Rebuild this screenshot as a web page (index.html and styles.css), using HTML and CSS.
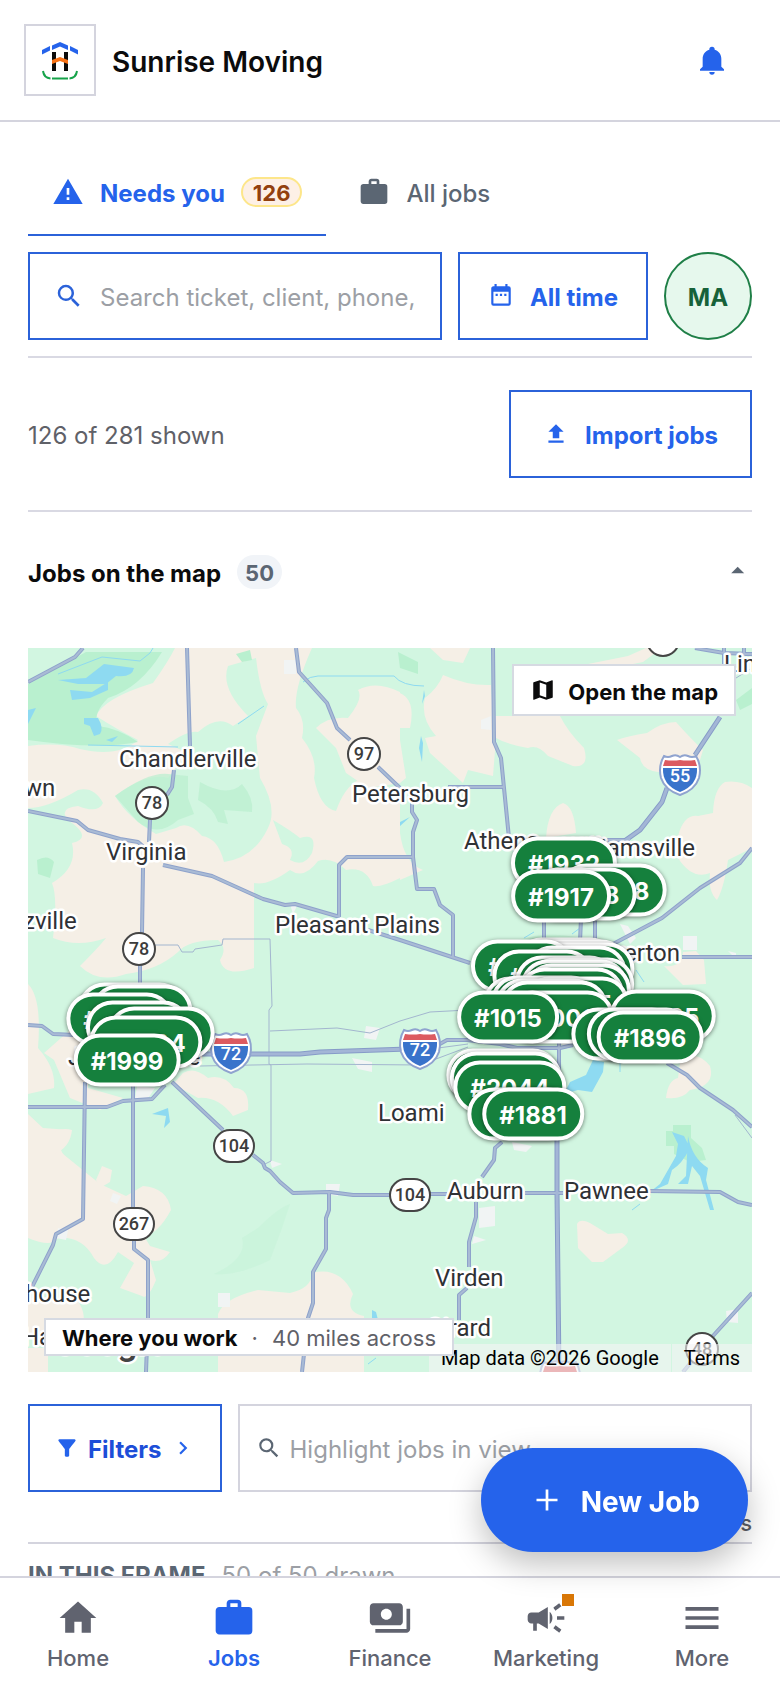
FILE: index.html
```html
<!DOCTYPE html>
<html lang="en">

<head>
  <meta charset="UTF-8">
  <meta name="viewport" content="width=device-width, initial-scale=1">
  <title>Jobs - Sunrise Moving</title>
  <link rel="stylesheet" href="styles.css">
</head>

<body>
  <header class="topbar">
    <a class="logo" href="#" aria-label="Sunrise Moving home">
      <svg width="40" height="40" viewBox="0 0 40 40">
        <path d="M2 10L10 6V10.500L2 14.500ZM12 5.500L20 2 28 5.500V10L20 6.500 12 10ZM30 6L38 10V14.500L30 10.500Z" fill="#2563eb" />
        <path d="M12 12h4v19h-4zM24 12h4v19h-4z" fill="#0b0b0b" />
        <path d="M12 20l8-3 8 3v4l-8-3-8 3z" fill="#f97316" />
        <path d="M3 31q1 7 7.500 7.500M12 38.500h16M29.500 38.500q6.500-.5 7.500-7.500" fill="none" stroke="#16a34a" stroke-width="2" />
      </svg>
    </a>
    <h1 class="label">Sunrise Moving</h1>
    <button class="bell" type="button" aria-label="Notifications">
      <svg class="icon-32" viewBox="0 0 24 24"><path d="M21,19V20H3V19L5,17V11C5,7.9 7.03,5.17 10,4.29C10,4.19 10,4.1 10,4A2,2 0 0,1 12,2A2,2 0 0,1 14,4C14,4.1 14,4.19 14,4.29C16.97,5.17 19,7.9 19,11V17L21,19M14,21A2,2 0 0,1 12,23A2,2 0 0,1 10,21" /></svg>
    </button>
  </header>

  <main>
    <div class="tabs">
      <button class="tab active" type="button">
        <svg class="icon-32" viewBox="0 0 24 24"><path d="M13 14H11V9H13M13 18H11V16H13M1 21H23L12 2L1 21Z" /></svg>
        <span class="label">Needs you</span>
        <span class="chip chip-warn">126</span>
      </button>
      <button class="tab" type="button">
        <svg class="icon-32" viewBox="0 0 24 24"><path d="M10,2H14A2,2 0 0,1 16,4V6H20A2,2 0 0,1 22,8V19A2,2 0 0,1 20,21H4C2.89,21 2,20.1 2,19V8C2,6.89 2.89,6 4,6H8V4C8,2.89 8.89,2 10,2M14,6V4H10V6H14Z" /></svg>
        <span class="label">All jobs</span>
      </button>
    </div>

    <div class="search-row">
      <label class="field field-main">
        <svg class="icon-30" viewBox="0 0 24 24"><path d="M9.5,3A6.5,6.5 0 0,1 16,9.5C16,11.11 15.41,12.59 14.44,13.73L14.71,14H15.5L20.5,19L19,20.5L14,15.5V14.71L13.73,14.44C12.59,15.41 11.11,16 9.5,16A6.5,6.5 0 0,1 3,9.5A6.5,6.5 0 0,1 9.5,3M9.5,5C7,5 5,7 5,9.5C5,12 7,14 9.5,14C12,14 14,12 14,9.5C14,7 12,5 9.5,5Z" /></svg>
        <input class="label" type="text" placeholder="Search ticket, client, phone," aria-label="Search jobs">
      </label>
      <button class="btn btn-time" type="button">
        <svg class="icon-26" viewBox="0 0 24 24"><path d="M9,10H7V12H9V10M13,10H11V12H13V10M17,10H15V12H17V10M19,3H18V1H16V3H8V1H6V3H5C3.89,3 3,3.9 3,5V19A2,2 0 0,0 5,21H19A2,2 0 0,0 21,19V5A2,2 0 0,0 19,3M19,19H5V8H19V19Z" /></svg>
        <span class="label">All time</span>
      </button>
      <button class="avatar label" type="button">MA</button>
    </div>

    <div class="summary">
      <p class="label">126 of 281 shown</p>
      <button class="btn btn-import" type="button">
        <svg class="icon-26" viewBox="0 0 24 24"><path d="M9,16V10H5L12,3L19,10H15V16H9M5,20V18H19V20H5Z" /></svg>
        <span class="label">Import jobs</span>
      </button>
    </div>

    <button class="map-head" type="button" aria-expanded="true">
      <span class="label">Jobs on the map</span>
      <span class="chip chip-count">50</span>
      <svg class="icon-26 caret" viewBox="3 4 20 20"><path d="M7,15L12,10L17,15H7Z" /></svg>
    </button>

    <section class="map" id="map" aria-label="Jobs on the map">
      <svg class="map-art" viewBox="0 0 724 724">
        <defs>
          <symbol id="interstate" viewBox="0 0 40 42" overflow="visible">
            <path d="M4 2q4 2 8 0q4-2 8 1q4-3 8-1q4 2 8 0q6 10 3 22q-4 12-19 17q-15-5-19-17q-3-12 3-22z" fill="#fff" stroke="#8fa3cf" stroke-width="2" />
            <path d="M5 6q8 1 15 0q7 1 15 0l2 6H3z" fill="#dc5a60" />
            <path d="M3 14h34q1 17-17 24q-18-7-17-24z" fill="#3973cb" />
          </symbol>
          <g id="roads">
            <path d="M0 34L47 9 55 0M159 0L162 98M146 122L144 139 139 147M122 172L121 194M115 220L114 285M112 317V337" />
            <path d="M0 163L49 173 60 182 92 191 110 194 117 200M135 217L184 228 235 251 257 257 267 256 312 269M340 282L372 292 442 315" />
            <path d="M268 0L271 24 299 55 309 80 322 92M350 119L372 140M311 269V217L319 209H385L389 241H406L412 257 425 267V309M385 209V184L389 172 384 164V154M420 139H476" />
            <path d="M465 0L466 94 473 110 481 190M579 192H602M667 0L696 5 724 6M696 0V18M716 0V8M724 200L712 215 672 240 634 270 585 296M516 272V294M553 270L552 294M567 270V296M654 309H724" />
            <path d="M0 377L14 378 25 386 47 387M57 434L55 571 28 586 25 597 4 639M105 437V559M106 592V601L120 612V670L118 724M0 459H79L95 453 124 451 137 437" />
            <path d="M144 434L195 482M225 507L235 515 237 520 242 523 252 534 265 545 302 544 325 547H362M301 544V562L298 570V601L285 624V655L280 670 274 724M402 546H419M497 545H535M620 543L692 544 710 554 724 557" />
            <path d="M474 494L467 500 466 512 454 529M448 554V569L441 594V619M439 640L431 647V672M639 415L659 427 672 440 705 462 724 479M724 645L684 689 655 724M410 397L419 392H439L472 396 489 400H532L545 397M531 395V439" />
          </g>
          <path id="freeways" d="M692 69L667 107M639 140L634 154 612 182 595 194 585 210M170 406H272L292 404 380 401M529 492V545L531 724" />
        </defs>

        <!-- land -->
        <rect width="724" height="724" fill="#d2f6e1" />
        <g class="sand">
          <path d="M147 0H284Q266 40 268 60Q278 72 274 90Q290 110 286 130Q292 160 308 163Q316 140 330 132L372 150V230Q352 240 345 238Q338 218 318 222Q304 208 290 213Q276 232 262 222Q240 238 226 235V320Q196 330 192 312Q200 300 190 292Q160 292 150 304Q130 322 98 326Q70 336 52 318Q70 300 78 290Q50 300 25 290Q30 250 24 235Q50 220 44 195Q66 190 40 172Q30 160 50 158Q70 166 75 155Q66 138 50 142Q20 160 0 160V98Q30 94 52 101Q90 110 110 92Q90 82 68 68Q76 50 125 35Q140 14 147 0Z" />
          <path d="M288 80Q300 68 320 70Q336 50 330 42Q348 32 372 44V92L378 130 372 135 340 140 318 125 308 100Z" />
          <path d="M402 0H442L435 15 415 12Z" />
          <path d="M372 45Q388 52 382 80L372 80ZM372 185Q376 215 395 222L372 232Z" />
          <path d="M415 27Q440 38 463 37L465 68H532Q540 84 556 100Q562 120 545 118L520 108Q510 96 500 100Q478 96 468 90L465 128 440 122 435 135 402 105 397 90 408 88Q392 70 397 50Q410 40 415 27Z" />
          <path d="M589 92Q600 88 619 85Q634 74 648 74Q664 92 675 102L672 112Q650 108 650 122L630 124Q614 122 612 110Z" />
          <path d="M697 134Q712 132 724 140V200L700 212Q696 240 689 252Q680 244 682 225Q664 232 650 210V188Q656 166 670 168L685 165Q686 140 697 134Z" />
          <path d="M535 155Q546 158 548 185L518 190Q520 160 535 155Z" />
          <path d="M560 16L600 8 618 0H634L615 14 600 17Z" />
          <path d="M636 318Q654 320 655 304L668 303 676 312 678 336 655 337Z" />
          <path d="M652 415Q668 400 682 418Q688 438 662 442Q654 452 638 450Q640 432 650 430Z" />
          <path d="M549 576Q552 570 562 575L580 586 594 585Q606 592 594 600L575 614H564L550 600Z" />
          <path d="M0 336Q14 350 10 400Q28 420 26 440L0 446ZM16 405L50 375 60 395V440L95 450 72 462 42 450 26 412Z" />
          <path d="M0 466L15 480 42 482Q24 500 40 510L72 536 98 548 115 538Q140 540 143 562Q130 586 116 588L122 598 142 604Q134 616 122 612L128 632Q120 652 114 648L92 640 106 615 90 604Q78 626 66 610Q54 588 30 590Q24 600 0 590Z" />
          <path d="M18 490Q30 478 44 482Q42 500 26 506ZM68 532L74 518 84 522 82 534 72 540Z" />
          <path d="M155 425Q166 418 180 430Q196 426 206 440Q222 440 220 462L205 468Q190 448 170 450L145 436Z" />
          <path d="M190 666Q196 650 230 642L262 645Q284 640 284 625Q312 618 325 646Q316 664 336 668V724H190Z" />
          <path d="M0 650L46 648Q60 664 54 680L0 690ZM0 700H20V724H0Z" />
        </g>
        <g class="mint">
          <path d="M140 96Q160 82 170 84Q190 66 205 78L220 68Q192 40 200 18L228 10Q232 44 240 56L228 88 232 130Q250 160 240 180Q226 210 196 214Q190 190 174 188Q160 172 148 180L128 186Q100 170 87 148Q120 124 140 130L160 105Z" />
          <path d="M245 172Q262 182 272 190Q290 184 284 205Q276 220 262 212Q268 200 254 196Z" />
        </g>
        <g class="forest">
          <path d="M0 36L58 4H134Q112 40 80 50Q64 66 70 78Q90 80 110 94Q70 102 0 92Z" />
          <path d="M87 148Q120 124 140 126L160 128V150L166 166 150 172Q130 190 110 174ZM172 134Q200 150 214 136Q226 150 224 164L196 162 200 176 190 174Q186 160 170 152Z" opacity=".7" />
          <path d="M9 212Q20 206 26 214L22 230 10 226ZM208 6L222 2 224 12 214 14Z" />
          <path d="M370 4L390 14V26L372 20ZM645 477H663V490L674 500 678 512 662 514 646 506V498H638V483H645ZM708 52L724 40V56L712 62Z" />
          <path d="M230 580Q250 560 262 556L254 580 242 612Q210 628 186 626Q220 610 214 590Z" opacity=".25" />
          <path d="M490 292Q530 280 570 296L600 320 570 330 500 326Z" opacity=".5" />
        </g>
        <g class="town">
          <path d="M256 12h12v14h-12zM453 72l10-4v14l-10-1zM655 288h14v14h-14zM700 303l8 2v6zM592 276l8 2 8 12-6 6zM338 378l14 2-4 12-12-2zM324 410l20 4v10l-14-3zM109 438l18 2-8 12-12-2zM298 536h14l-2 12-12-2zM242 512l12 4-10 4zM190 645h12v14h-12zM30 580l10 2-2 10-10-2zM451 560l16-2v20l-16 2zM446 588l12 4-14 4zM484 494l20 4-6 6-12-2zM698 663l12-2v14l-11-1z" />
          <path d="M85 545l8 3-4 8-7-3zM262 256l7 2-4 8zM532 395l16-4-8 10z" />
        </g>

        <!-- water -->
        <g class="water">
          <path d="M30 32L58 30 76 16 106 20Q104 30 88 28L78 36 50 36ZM42 42L64 44 80 34 80 42 62 50 44 52ZM56 70H70Q76 80 72 86L66 88 62 78 56 76ZM0 62L8 60 0 76ZM78 92L90 88 84 94Z" />
          <path d="M565 412L576 414 575 424 564 444 550 442 536 446 542 434 558 427Z" />
          <path d="M644 484L656 488 662 500Q654 516 644 522L640 536 622 544 632 536 648 508 650 496ZM660 488Q664 510 680 520L678 532 686 562 682 562 672 528 664 518 660 536 650 536 658 528Z" />
          <path d="M124 466L140 460 142 474 136 480 138 468ZM372 174L382 169 372 178ZM393 88L395 95 394 114 391 100ZM396 42L394 56 397 48ZM344 662L348 664 350 672 344 670Z" />
        </g>
        <g class="stream">
          <path d="M30 26L74 9 112 13 122 5 125 0M210 76L236 58M275 34Q282 28 290 28H366Q374 38 396 38M60 97L150 99M496 290L506 284M544 286L552 280M608 322L616 334M604 562L612 556M592 424V414M340 716L348 710" />
        </g>

        <!-- county lines and back roads -->
        <g class="thin">
          <path d="M127 297H150L154 304H165L167 301L194 297 195 291H242L244 358 241 362V416L243 417V513L235 517" />
          <path d="M242 383L309 380 342 385 372 373 402 364 440 362M172 418L279 416 392 417 440 399M410 400L440 396M707 467L724 490M692 40L724 20" />
        </g>

        <!-- highways: dark casing first, then the lighter fill -->
        <use href="#roads" class="road-casing" />
        <use href="#freeways" class="freeway-casing" />
        <use href="#roads" class="road" />
        <use href="#freeways" class="freeway" />

        <!-- route shields -->
        <g class="route">
          <circle cx="336" cy="106" r="16" /><text x="336" y="112">97</text>
          <circle cx="124" cy="155" r="16" /><text x="124" y="161">78</text>
          <circle cx="111" cy="301" r="16" /><text x="111" y="307">78</text>
          <circle cx="635" cy="-8" r="16" />
          <circle cx="674" cy="701" r="16" /><text x="674" y="707">48</text>
          <rect x="186" y="482" width="40" height="32" rx="16" /><text x="206" y="504">104</text>
          <rect x="86" y="560" width="40" height="32" rx="16" /><text x="106" y="582">267</text>
          <rect x="362" y="531" width="40" height="32" rx="16" /><text x="382" y="553">104</text>
        </g>
        <g class="shield">
          <use href="#interstate" x="183" y="384" width="40" height="42" /><text x="203" y="412">72</text>
          <use href="#interstate" x="372" y="380" width="40" height="42" /><text x="392" y="408">72</text>
          <use href="#interstate" x="632" y="106" width="40" height="42" /><text x="652" y="134">55</text>
          <use href="#interstate" x="512" y="712" width="40" height="42" />
        </g>

        <!-- towns -->
        <g class="place">
          <text x="91" y="119">Chandlerville</text>
          <text x="-4" y="148">wn</text>
          <text x="78" y="212">Virginia</text>
          <text x="-5" y="281">zville</text>
          <text x="247" y="285">Pleasant Plains</text>
          <text x="324" y="154">Petersburg</text>
          <text x="436" y="201">Athens</text>
          <text class="end" x="667" y="208">Williamsville</text>
          <text class="end" x="652" y="313">Riverton</text>
          <text x="696" y="24">Lin</text>
          <text x="40" y="417">Jacksonville</text>
          <text x="350" y="473">Loami</text>
          <text x="419" y="551">Auburn</text>
          <text x="536" y="551">Pawnee</text>
          <text x="407" y="638">Virden</text>
          <text class="end" x="463" y="688">Girard</text>
          <text x="-3" y="654">house</text>
          <text x="-6" y="697">Ha</text>
          <text class="brand" x="24" y="706">Google</text>
        </g>
      </svg>

      <div class="pins" id="pins"></div>

      <a class="open-map" href="#">
        <svg class="icon-26" viewBox="0 0 24 24"><path d="M20.500 3l-.16.03L15 5.100 9 3 3.360 4.900c-.21.07-.36.25-.36.48V20.500c0 .28.22.5.5.5l.16-.03L9 18.900l6 2.100 5.640-1.900c.21-.07.36-.25.36-.48V3.500c0-.28-.22-.5-.5-.5zM15 19l-6-2.110V5l6 2.110V19z" /></svg>
        <span class="label">Open the map</span>
      </a>
      <div class="attribution">
        <span>Map data ©2026 Google</span>
        <a href="#">Terms</a>
      </div>
      <p class="area"><b>Where you work</b><span>·</span><span>40 miles across</span></p>
    </section>

    <div class="filter-row">
      <button class="btn btn-filter" type="button">
        <svg class="icon-26" viewBox="0 0 24 24"><path d="M4.250 5.610C6.270 8.200 10 13 10 13v6c0 .55.45 1 1 1h2c.55 0 1-.45 1-1v-6s3.720-4.800 5.740-7.390A.998.998 0 0 0 18.950 4H5.040c-.83 0-1.300.95-.79 1.610z" /></svg>
        <span class="label">Filters</span>
        <svg class="icon-26" viewBox="0 0 24 24"><path d="M8.59,16.58L13.17,12L8.59,7.41L10,6L16,12L10,18L8.59,16.58Z" /></svg>
      </button>
      <label class="field field-quiet">
        <svg class="icon-26" viewBox="0 0 24 24"><path d="M9.5,3A6.5,6.5 0 0,1 16,9.5C16,11.11 15.41,12.59 14.44,13.73L14.71,14H15.5L20.5,19L19,20.5L14,15.5V14.71L13.73,14.44C12.59,15.41 11.11,16 9.5,16A6.5,6.5 0 0,1 3,9.5A6.5,6.5 0 0,1 9.5,3M9.5,5C7,5 5,7 5,9.5C5,12 7,14 9.5,14C12,14 14,12 14,9.5C14,7 12,5 9.5,5Z" /></svg>
        <input class="label" type="text" placeholder="Highlight jobs in view" aria-label="Highlight jobs in view">
      </label>
    </div>
    <p class="job-total">50 jobs</p>

    <h2 class="frame-head">IN THIS FRAME <small>50 of 50 drawn</small></h2>
  </main>

  <button class="fab" type="button">
    <svg class="icon-36" viewBox="0 0 24 24"><path d="M19 12.900H12.900V19H11.100V12.900H5V11.100H11.100V5H12.900V11.100H19Z" /></svg>
    <span class="label">New Job</span>
  </button>

  <nav class="tabbar">
    <a href="#">
      <svg class="icon-44" viewBox="0 0 24 24"><path d="M10,20V14H14V20H19V12H22L12,3L2,12H5V20H10Z" /></svg>
      Home
    </a>
    <a class="active" href="#">
      <svg class="icon-44" viewBox="0 0 24 24"><path d="M10,2H14A2,2 0 0,1 16,4V6H20A2,2 0 0,1 22,8V19A2,2 0 0,1 20,21H4C2.89,21 2,20.1 2,19V8C2,6.89 2.89,6 4,6H8V4C8,2.89 8.89,2 10,2M14,6V4H10V6H14Z" /></svg>
      Jobs
    </a>
    <a href="#">
      <svg class="icon-44" viewBox="0 0 24 24"><path d="M19 14V6c0-1.100-.9-2-2-2H3c-1.100 0-2 .9-2 2v8c0 1.100.9 2 2 2h14c1.100 0 2-.9 2-2zm-9-1c-1.660 0-3-1.340-3-3s1.340-3 3-3 3 1.340 3 3-1.340 3-3 3zm13-6v11c0 1.100-.9 2-2 2H4v-2h17V7h2z" /></svg>
      Finance
    </a>
    <a href="#">
      <span class="badge-wrap">
        <svg class="icon-44" viewBox="0 0 24 24"><path d="M18 11v2h4v-2h-4zm-2 6.610c.96.71 2.210 1.650 3.200 2.390.4-.53.8-1.070 1.200-1.600-.99-.74-2.240-1.680-3.200-2.400-.4.54-.8 1.080-1.200 1.610zM20.400 5.600c-.4-.53-.8-1.070-1.200-1.600-.99.74-2.240 1.680-3.200 2.400.4.53.8 1.070 1.200 1.600.96-.72 2.210-1.650 3.200-2.400zM4 9c-1.100 0-2 .9-2 2v2c0 1.100.9 2 2 2h1v4h2v-4h1l5 3V6L8 9H4zm11.500 3c0-1.330-.58-2.530-1.500-3.350v6.690c.92-.81 1.500-2.010 1.500-3.340z" /></svg>
        <i class="badge"></i>
      </span>
      Marketing
    </a>
    <a href="#">
      <svg class="icon-44" viewBox="0 0 24 24"><path d="M3,6H21V8H3V6M3,11H21V13H3V11M3,16H21V18H3V16Z" /></svg>
      More
    </a>
  </nav>

  <script src="script.js"></script>
</body>

</html>
```
FILE: styles.css
```css
* {
  box-sizing: border-box;
}

body {
  margin: 0;
  background-color: #fff;
  color: #0b0b0c;
  font-family: Inter, "Liberation Sans", sans-serif;
  font-size: 24px;
  line-height: 32px;
}

h1,
h2,
p {
  margin: 0;
}

button,
input {
  font: inherit;
  color: inherit;
}

button {
  padding: 0;
  border: none;
  background: none;
  cursor: pointer;
}

a {
  color: inherit;
  text-decoration: none;
}

svg {
  display: block;
  flex: none;
  fill: currentColor;
}

.icon-26 { width: 26px; height: 26px; }
.icon-30 { width: 30px; height: 30px; }
.icon-32 { width: 32px; height: 32px; }
.icon-36 { width: 36px; height: 36px; }
.icon-44 { width: 44px; height: 44px; }

/* header */
.topbar {
  display: flex;
  align-items: center;
  gap: 16px;
  height: 122px;
  padding: 0 52px 0 24px;
  border-bottom: 2px solid #d4d4de;
}

.logo {
  display: flex;
  align-items: center;
  justify-content: center;
  width: 72px;
  height: 72px;
  border: 2px solid #d4d4de;
}

.topbar h1 {
  flex: 1;
  font-size: 28px;
  font-weight: 600;
}

.bell {
  color: #2563eb;
}

main {
  padding: 28px 28px 96px;
}

/* tabs */
.tabs {
  display: flex;
  gap: 8px;
}

.tab {
  display: flex;
  align-items: center;
  gap: 16px;
  height: 86px;
  padding: 0 24px;
  border-bottom: 2px solid transparent;
  color: #5b6673;
  font-weight: 500;
}

.tab.active {
  border-bottom-color: #2b62d9;
  color: #2563eb;
  font-weight: 700;
}

.chip {
  border-radius: 18px;
  font-size: 22px;
  font-weight: 700;
}

.chip-warn {
  padding: 2px 10px 0;
  border: 2px solid #fde68a;
  background-color: #fdf0e6;
  color: #92400e;
  line-height: 24px;
}

.chip-count {
  padding: 2px 8px 0;
  background-color: #f1f4f8;
  color: #5b6673;
  line-height: 32px;
}

/* search and filters */
.search-row,
.filter-row {
  display: flex;
  gap: 16px;
}

.search-row {
  padding: 16px 0;
  border-bottom: 2px solid #d9d9e3;
}

.field {
  display: flex;
  flex: 1;
  align-items: center;
  min-width: 0;
  height: 88px;
  border: 2px solid #d4d4de;
}

.field input {
  flex: 1;
  min-width: 0;
  padding: 0;
  border: none;
  outline: none;
  background: none;
}

.field input::placeholder {
  color: #9c9fa5;
  opacity: 1;
}

.field-main {
  gap: 16px;
  padding: 0 24px;
  border-color: #2b62d9;
}

.field-main svg {
  color: #2b62d9;
}

.field-quiet {
  gap: 8px;
  padding: 0 16px;
}

.field-quiet svg {
  color: #5b6673;
}

.btn {
  display: flex;
  align-items: center;
  gap: 16px;
  height: 88px;
  border: 2px solid #2b62d9;
  color: #2563eb;
  font-weight: 700;
}

.btn-time {
  padding: 0 28px;
}

.btn-import {
  padding: 0 32px;
}

.btn-filter {
  gap: 8px;
  padding: 0 24px;
}

.btn-filter span {
  color: #1d4ed8;
}

.avatar {
  width: 88px;
  height: 88px;
  border: 2px solid #1f7f47;
  border-radius: 50%;
  background-color: #e6f8ed;
  color: #166239;
  font-weight: 700;
}

.summary {
  display: flex;
  align-items: center;
  justify-content: space-between;
  padding: 32px 0;
  border-bottom: 2px solid #d9d9e3;
  color: #5f6168;
}

/* text sits a little low beside the icons */
.label,
.field .label {
  padding-top: 4px;
}

/* map */
.map-head {
  display: flex;
  align-items: center;
  gap: 16px;
  width: 100%;
  height: 120px;
  margin-bottom: 16px;
  font-weight: 700;
}

.caret {
  margin-left: auto;
  color: #5b6673;
}

.map {
  position: relative;
  overflow: hidden;
  margin-bottom: 32px;
}

.map-art {
  width: 100%;
  height: auto;
}

.sand { fill: #f5efe6; }
.mint { fill: #d2f6e1; }
.forest { fill: #b9f0cf; }
.town { fill: #f1f4f4; }
.water { fill: #8edaf1; }

.stream,
.thin,
.road-casing,
.road,
.freeway-casing,
.freeway {
  fill: none;
  stroke-linejoin: round;
}

.stream {
  stroke: #8edaf1;
  stroke-width: 1;
}

.thin {
  stroke: #a3b6cf;
  stroke-width: 1;
}

.road-casing {
  stroke: #8ea2cb;
  stroke-width: 4;
}

.road {
  stroke: #a9bbd5;
  stroke-width: 2;
}

.freeway-casing {
  stroke: #869bc8;
  stroke-width: 5;
}

.freeway {
  stroke: #a3b6d6;
  stroke-width: 3;
}

.route {
  fill: #fff;
  stroke: #454545;
  stroke-width: 2;
}

.route text,
.shield text {
  fill: #3c3c3c;
  stroke: none;
  font-family: Roboto, sans-serif;
  font-size: 18px;
  font-weight: 500;
  text-anchor: middle;
}

.shield text {
  fill: #fff;
}

.place text {
  fill: #2f3135;
  stroke: #fff;
  stroke-width: 5px;
  stroke-linejoin: round;
  paint-order: stroke;
  font-family: Roboto, sans-serif;
  font-size: 24px;
}

.place .end {
  text-anchor: end;
}

.place .brand {
  fill: #444;
  font-size: 36px;
  font-weight: 500;
}

.pins {
  position: absolute;
  inset: 0;
}

.pin {
  position: absolute;
  height: 53px;
  padding: 2px 13px 0;
  border: 4px solid #fff;
  border-radius: 27px;
  background-color: #15803d;
  box-shadow: 0 1px 4px rgba(0, 0, 0, 0.5);
  color: #fff;
  font-size: 24px;
  font-weight: 700;
  transform: translate(-50%, -50%);
}

.open-map {
  position: absolute;
  top: 16px;
  right: 16px;
  display: flex;
  align-items: center;
  gap: 12px;
  height: 52px;
  padding: 0 16px;
  border: 2px solid #d6dae2;
  background-color: #fff;
  font-size: 22px;
  font-weight: 700;
}

.attribution {
  position: absolute;
  right: 0;
  bottom: 0;
  display: flex;
  gap: 1px;
  color: #000;
  font-family: Roboto, sans-serif;
  font-size: 20px;
  line-height: 28px;
}

.attribution span,
.attribution a {
  padding: 0 12px;
  background-color: rgba(245, 245, 245, 0.6);
}

.area {
  position: absolute;
  left: 16px;
  bottom: 16px;
  display: flex;
  gap: 14px;
  padding: 2px 16px 0;
  border: 2px solid #d6dae2;
  background-color: #fff;
  color: #5f6168;
  font-size: 22px;
  line-height: 32px;
}

.area b {
  color: #0b0b0c;
  font-weight: 700;
}

/* list below the map */
.job-total {
  padding: 16px 0 4px;
  border-bottom: 2px solid #d4d4de;
  color: #5b5e66;
  font-size: 22px;
  font-weight: 500;
  line-height: 30px;
  text-align: right;
}

.frame-head {
  display: flex;
  gap: 16px;
  padding-top: 16px;
  color: #5b6673;
  font-size: 24px;
  font-weight: 700;
}

.frame-head small {
  color: #9c9fa5;
  font-size: 24px;
  font-weight: 400;
}

.fab {
  position: fixed;
  right: 32px;
  bottom: 136px;
  z-index: 2;
  display: flex;
  align-items: center;
  gap: 16px;
  height: 104px;
  padding: 0 48px;
  border-radius: 52px;
  background-color: #2563eb;
  box-shadow: 0 12px 32px rgba(0, 0, 0, 0.25);
  color: #fff;
  font-size: 28px;
  font-weight: 700;
}

/* bottom navigation */
.tabbar {
  position: fixed;
  right: 0;
  bottom: 0;
  left: 0;
  z-index: 1;
  display: flex;
  height: 112px;
  border-top: 2px solid #d4d4de;
  background-color: #fff;
}

.tabbar a {
  display: flex;
  flex: 1;
  flex-direction: column;
  align-items: center;
  gap: 2px;
  padding-top: 18px;
  color: #60636f;
  font-size: 22px;
  font-weight: 500;
}

.tabbar .active {
  color: #2563eb;
  font-weight: 600;
}

.badge-wrap {
  position: relative;
}

.badge {
  position: absolute;
  top: -2px;
  right: -6px;
  width: 12px;
  height: 12px;
  background-color: #d97706;
}
```
FILE: script.js
```js
// Ticket number and centre of each pin, on the 724 x 724 grid of the map art.
// Later pins are drawn on top.
var MAP_SIZE = 724;
var pins = [
  ['#1940', 104, 361], ['#1951', 114, 363], ['#1960', 92, 371],
  ['#1972', 110, 379], ['#1988', 133, 385], ['#2004', 118, 394],
  ['#1999', 99, 412],
  ['#1932', 536, 215], ['#1938', 585, 242], ['#1878', 556, 246],
  ['#1917', 533, 248],
  ['#1801', 538, 316], ['#1804', 546, 318], ['#1807', 554, 321],
  ['#1810', 494, 318], ['#1812', 548, 324], ['#1815', 515, 328],
  ['#1819', 538, 334], ['#1822', 553, 336], ['#1824', 546, 338],
  ['#1826', 550, 342], ['#1829', 543, 346],
  ['#1831', 506, 355], ['#1833', 516, 354], ['#1835', 548, 355],
  ['#1837', 520, 357], ['#1839', 526, 359], ['#1006', 532, 369],
  ['#1015', 480, 369],
  ['#1985', 635, 368], ['#1890', 597, 386], ['#1892', 612, 386],
  ['#1896', 622, 389],
  ['#2040', 475, 427], ['#2042', 478, 430], ['#2044', 482, 439],
  ['#1880', 493, 466], ['#1881', 505, 466]
];

var layer = document.getElementById('pins');

pins.forEach(function (pin) {
  var el = document.createElement('button');
  el.type = 'button';
  el.className = 'pin';
  el.textContent = pin[0];
  el.style.left = (pin[1] / MAP_SIZE * 100) + '%';
  el.style.top = (pin[2] / MAP_SIZE * 100) + '%';
  layer.appendChild(el);
});
```
